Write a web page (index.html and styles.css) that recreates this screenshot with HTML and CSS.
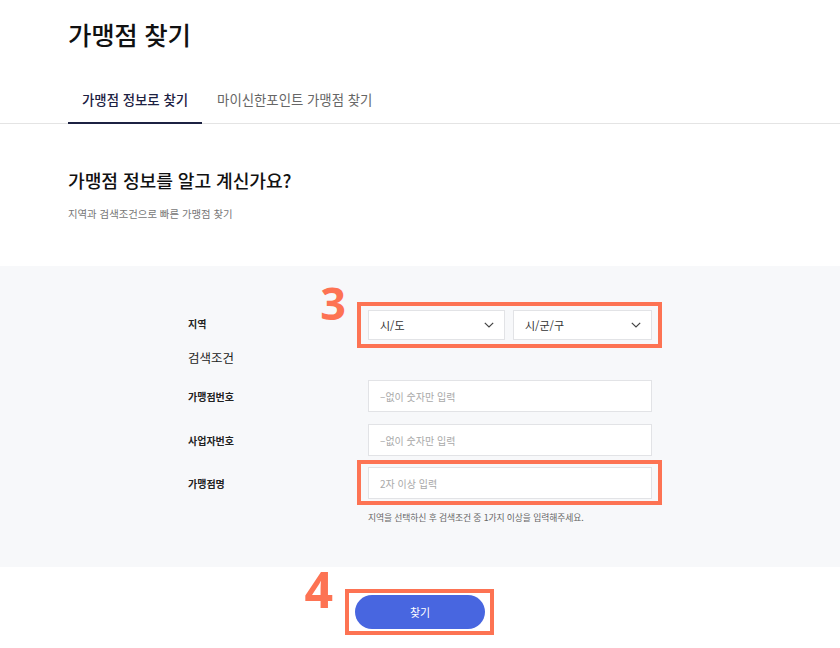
FILE: index.html
```html
<!DOCTYPE html>
<html lang="ko">
<head>
<meta charset="utf-8">
<title>가맹점 찾기</title>
<link rel="stylesheet" href="styles.css">
</head>
<body>
<header class="page-head">
  <h1 class="page-title">가맹점 찾기</h1>
  <nav class="tabs">
    <a class="tab tab-active">가맹점 정보로 찾기</a>
    <a class="tab">마이신한포인트 가맹점 찾기</a>
  </nav>
</header>

<section class="intro">
  <h2 class="intro-title">가맹점 정보를 알고 계신가요?</h2>
  <p class="intro-desc">지역과 검색조건으로 빠른 가맹점 찾기</p>
</section>

<section class="search">
  <div class="form">
    <div class="row">
      <div class="label">지역</div>
      <div class="field selects mark">
        <span class="step step-3">3</span>
        <div class="select">
          <span>시/도</span>
          <svg class="chev" width="10" height="6" viewBox="0 0 10 6"><polyline points="0.8,0.8 5,5 9.2,0.8" fill="none" stroke="#444" stroke-width="1.2"/></svg>
        </div>
        <div class="select">
          <span>시/군/구</span>
          <svg class="chev" width="10" height="6" viewBox="0 0 10 6"><polyline points="0.8,0.8 5,5 9.2,0.8" fill="none" stroke="#444" stroke-width="1.2"/></svg>
        </div>
      </div>
    </div>
    <div class="group-title">검색조건</div>
    <div class="row row-input">
      <div class="label">가맹점번호</div>
      <div class="field"><input class="input" type="text" placeholder="–없이 숫자만 입력"></div>
    </div>
    <div class="row row-input">
      <div class="label">사업자번호</div>
      <div class="field"><input class="input" type="text" placeholder="–없이 숫자만 입력"></div>
    </div>
    <div class="row row-input row-last">
      <div class="label">가맹점명</div>
      <div class="field mark mark-input"><input class="input" type="text" placeholder="2자 이상 입력"></div>
    </div>
    <p class="help">지역을 선택하신 후 검색조건 중 1가지 이상을 입력해주세요.</p>
  </div>
</section>

<div class="actions">
  <div class="btn-wrap mark mark-btn">
    <span class="step step-4">4</span>
    <button class="btn" type="button">찾기</button>
  </div>
</div>
</body>
</html>
```

FILE: styles.css
```css
* { box-sizing: border-box; }
html, body { margin: 0; padding: 0; background: #fff; }
body {
  font-family: "Noto Sans CJK KR", "Noto Sans", sans-serif;
  color: #111;
  width: 840px;
  min-height: 648px;
}

.page-head {
  padding-top: 16px;
  border-bottom: 1px solid #e4e4e4;
}
.page-title {
  margin: 0 0 0 68px;
  font-size: 25.5px;
  line-height: 36px;
  font-weight: 500;
  color: #111;
  letter-spacing: -0.3px;
}
.tabs {
  display: flex;
  margin: 37px 0 0 68px;
}
.tab {
  display: block;
  font-size: 13.4px;
  line-height: 20px;
  padding: 0 14px 13px 15px;
  color: #666;
  border-bottom: 2px solid transparent;
  margin-bottom: -1px;
}
.tab-active {
  color: #1c2142;
  font-weight: 500;
  border-bottom-color: #1c2142;
  padding: 0 14px 13px 14px;
}

.intro { padding: 43px 0 45px 68px; }
.intro-title {
  margin: 0;
  font-size: 18.2px;
  line-height: 26px;
  font-weight: 500;
  color: #111;
  letter-spacing: -0.1px;
}
.intro-desc {
  margin: 14px 0 0;
  font-size: 10.4px;
  line-height: 14px;
  color: #777;
}

.search {
  background: #f7f8fa;
  padding: 44px 0 43px;
}
.form {
  width: 464px;
  margin: 0 auto;
}
.row {
  display: flex;
  align-items: center;
}
.label {
  width: 180px;
  flex: none;
  font-size: 10px;
  font-weight: 700;
  color: #222;
  padding-bottom: 4px;
}
.row-input .label { padding-bottom: 0; }
.field {
  flex: 1;
  position: relative;
}
.selects {
  display: flex;
  gap: 8px;
}
.select {
  height: 30px;
  flex: 1;
  background: #fff;
  border: 1px solid #e2e3e6;
  display: flex;
  align-items: center;
  justify-content: space-between;
  padding: 0 10px 0 11px;
  font-size: 11px;
  color: #333;
}
.select:first-of-type { flex: 0 0 137px; }
.chev { display: block; }

.group-title {
  margin: 8px 0 12px;
  font-size: 12.5px;
  line-height: 20px;
  color: #222;
}
.row-input + .row-input { margin-top: 12px; }
.row-last { margin-top: 11px !important; }
.input {
  display: block;
  width: 100%;
  height: 32px;
  border: 1px solid #e2e3e6;
  background: #fff;
  padding: 0 11px;
  font-family: inherit;
  font-size: 10px;
  color: #333;
  outline: none;
}
.input::placeholder { color: #a9a9a9; }

.help {
  margin: 13px 0 0 180px;
  font-size: 8.8px;
  line-height: 12px;
  color: #666;
  letter-spacing: -0.1px;
}

/* annotation overlays */
.mark::after {
  content: "";
  position: absolute;
  border: 4px solid #fd7353;
  pointer-events: none;
}
.selects::after { top: -8px; bottom: -8px; left: -11px; right: -10px; }
.mark-input::after { top: -7px; bottom: -6px; left: -11px; right: -10px; }
.mark-btn::after { top: -6px; bottom: -6px; left: -10px; right: -9px; }

.step {
  position: absolute;
  font-family: "Noto Sans", "Open Sans", sans-serif;
  font-weight: 700;
  color: #fd7353;
  line-height: 1;
}
.step-3 { font-size: 45px; right: calc(100% + 22px); top: -30px; }
.step-4 { font-size: 50px; right: calc(100% + 22px); top: -31px; }

.actions {
  display: flex;
  justify-content: center;
  align-items: flex-start;
  padding: 28px 0 20px;
}
.btn-wrap {
  position: relative;
  width: 130px;
  height: 34px;
}
.btn {
  display: block;
  width: 130px;
  height: 34px;
  border: none;
  border-radius: 17px;
  background: #4866e0;
  color: #fff;
  font-family: inherit;
  font-size: 11px;
  cursor: pointer;
}
```
